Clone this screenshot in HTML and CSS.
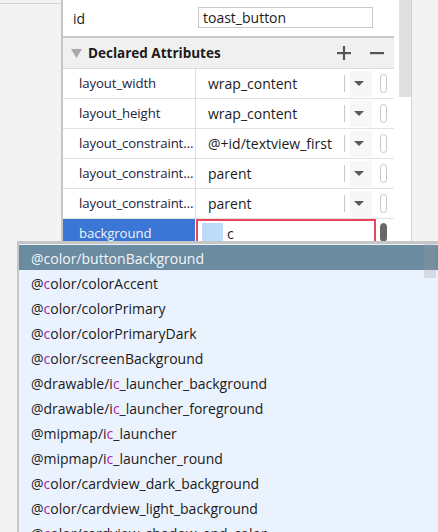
FILE: index.html
```html
<!DOCTYPE html>
<html>
<head>
<meta charset="utf-8">
<link rel="stylesheet" href="styles.css">
</head>
<body>
<div class="app">
  <div class="left"><div class="left-top"></div></div>
  <div class="divider"></div>
  <div class="main">
    <div class="id-row">
      <div class="id-label">id</div>
      <div class="id-input">toast_button</div>
    </div>
    <div class="header">
      <svg class="tri" width="11" height="9" viewBox="0 0 11 9"><polygon points="0,0 11,0 5.5,9" fill="#a9a9a9"/></svg>
      <div class="header-title">Declared Attributes</div>
      <svg class="hbtn" width="14" height="14" viewBox="0 0 14 14"><rect x="0" y="6" width="14" height="2.2" fill="#555"/><rect x="5.9" y="0" width="2.2" height="14" fill="#555"/></svg>
      <svg class="hbtn minus" width="14" height="14" viewBox="0 0 14 14"><rect x="0" y="6" width="14" height="2.2" fill="#555"/></svg>
    </div>
    <div class="row">
      <div class="lab">layout_width</div>
      <div class="val"><span class="vt">wrap_content</span><span class="sep"></span><span class="arrow"><i></i></span><span class="pill"></span></div>
    </div>
    <div class="row">
      <div class="lab">layout_height</div>
      <div class="val"><span class="vt">wrap_content</span><span class="sep"></span><span class="arrow"><i></i></span><span class="pill"></span></div>
    </div>
    <div class="row">
      <div class="lab">layout_constraint…</div>
      <div class="val"><span class="vt">@+id/textview_first</span><span class="sep"></span><span class="arrow"><i></i></span><span class="pill"></span></div>
    </div>
    <div class="row">
      <div class="lab">layout_constraint…</div>
      <div class="val"><span class="vt">parent</span><span class="sep"></span><span class="arrow"><i></i></span><span class="pill"></span></div>
    </div>
    <div class="row">
      <div class="lab">layout_constraint…</div>
      <div class="val"><span class="vt">parent</span><span class="sep"></span><span class="arrow"><i></i></span><span class="pill"></span></div>
    </div>
    <div class="row sel">
      <div class="lab">background</div>
      <div class="val"><div class="edit"><span class="swatch"></span><span class="et">c</span></div><span class="pill dark"></span></div>
    </div>
  </div>
  <div class="vscroll"><div class="thumb"></div></div>
  <div class="right"></div>
</div>
<div class="popup">
  <div class="pscroll"></div>
  <div class="item active">@color/buttonBackground</div>
  <div class="item">@<b>c</b>olor/colorAccent</div>
  <div class="item">@<b>c</b>olor/colorPrimary</div>
  <div class="item">@<b>c</b>olor/colorPrimaryDark</div>
  <div class="item">@<b>c</b>olor/screenBackground</div>
  <div class="item">@drawable/i<b>c</b>_launcher_background</div>
  <div class="item">@drawable/i<b>c</b>_launcher_foreground</div>
  <div class="item">@mipmap/i<b>c</b>_launcher</div>
  <div class="item">@mipmap/i<b>c</b>_launcher_round</div>
  <div class="item">@<b>c</b>olor/cardview_dark_background</div>
  <div class="item">@<b>c</b>olor/cardview_light_background</div>
  <div class="item">@<b>c</b>olor/cardview_shadow_end_color</div>
</div>
</body>
</html>
```

FILE: styles.css
```css
* { box-sizing: border-box; }
html, body { margin: 0; padding: 0; }
body {
  width: 438px;
  height: 532px;
  overflow: hidden;
  position: relative;
  font-family: "Open Sans", "Noto Sans", sans-serif;
  font-size: 14px;
  color: #1b1b1b;
  background: #f3f3f3;
}
.app { display: flex; height: 532px; }
.left { width: 61px; background: #f3f3f3; }
.left-top { height: 4px; border-bottom: 1px solid #d3d3d3; }
.divider { width: 2px; background: #c6c6c6; }
.main { width: 331px; background: #fff; }
.id-row {
  height: 38px;
  border-bottom: 2px solid #c9c9c9;
  display: flex;
  align-items: flex-start;
}
.id-label { width: 135px; padding-left: 10px; padding-top: 9px; }
.id-input {
  margin-top: 7px;
  width: 175px;
  height: 21px;
  border: 1px solid #c9c9c9;
  padding-left: 4px;
  line-height: 19px;
}
.header {
  height: 31px;
  background: #f0f0f0;
  border-bottom: 1px solid #dcdcdc;
  display: flex;
  align-items: center;
}
.tri { margin-left: 8px; margin-right: 6px; margin-top: 1px; }
.header-title { font-weight: 700; font-size: 13.5px; flex: 1; }
.hbtn { margin-right: 19px; }
.hbtn.minus { margin-right: 10px; }
.row {
  height: 30px;
  border-bottom: 1px solid #e1e1e1;
  display: flex;
}
.lab {
  width: 133px;
  flex: none;
  border-right: 1px solid #dedede;
  padding-left: 16px;
  line-height: 29px;
  font-size: 13.2px;
  letter-spacing: -0.1px;
  color: #23233a;
  white-space: nowrap;
}
.val { flex: 1; display: flex; align-items: center; }
.vt { flex: 1; padding-left: 12px; white-space: nowrap; }
.sep { width: 1px; height: 17px; background: #c8c8c8; margin-right: 5px; }
.arrow {
  width: 22px;
  height: 26px;
  background: #f7f7f7;
  display: flex;
  align-items: center;
  padding-left: 4px;
}
.arrow i {
  width: 0; height: 0;
  border-left: 5px solid transparent;
  border-right: 5px solid transparent;
  border-top: 5px solid #5a5a5a;
}
.pill {
  width: 7px;
  height: 19px;
  border: 1px solid #c6c6c6;
  border-radius: 4px;
  margin-left: 8px;
  margin-right: 7px;
}
.pill.dark { background: #676767; border-color: #676767; }
.row.sel .lab { background: #3a76d6; color: #eef3fb; border-right-color: #fff; }
.row.sel .val { align-items: flex-start; }
.edit {
  width: 180px;
  height: 30px;
  border: 2px solid #e5465b;
  display: flex;
  align-items: flex-start;
  padding-left: 4px;
  padding-top: 2px;
}
.swatch { width: 21px; height: 20px; background: #bedcf8; }
.et { margin-left: 4px; line-height: 22px; }
.row.sel .pill { margin-left: 4px; margin-top: 4px; }
.vscroll {
  width: 18px;
  background: #fff;
  border-right: 1px solid #d2d2d2;
  padding-left: 5px;
}
.thumb { height: 97px; background: #e0e0e0; }
.right { flex: 1; background: #f3f3f3; }
.popup {
  position: absolute;
  left: 17px;
  top: 241px;
  right: 0;
  bottom: 0;
  background: #eaf2fe;
  border-top: 3px solid #c6c6c6;
  border-left: 2px solid #c6c6c6;
  padding-top: 1px;
  overflow: hidden;
}
.pscroll {
  position: absolute;
  right: 2px;
  top: -1px;
  width: 12px;
  height: 35px;
  background: rgba(155,155,155,0.27);
}
.item {
  height: 25px;
  line-height: 27px;
  padding-left: 12px;
  white-space: nowrap;
  color: #1a1a1a;
  font-size: 14px;
}
.item b { font-weight: 400; color: #b01cb0; }
.item.active { background: #6b8ba0; color: #f4f6f8; }
```
